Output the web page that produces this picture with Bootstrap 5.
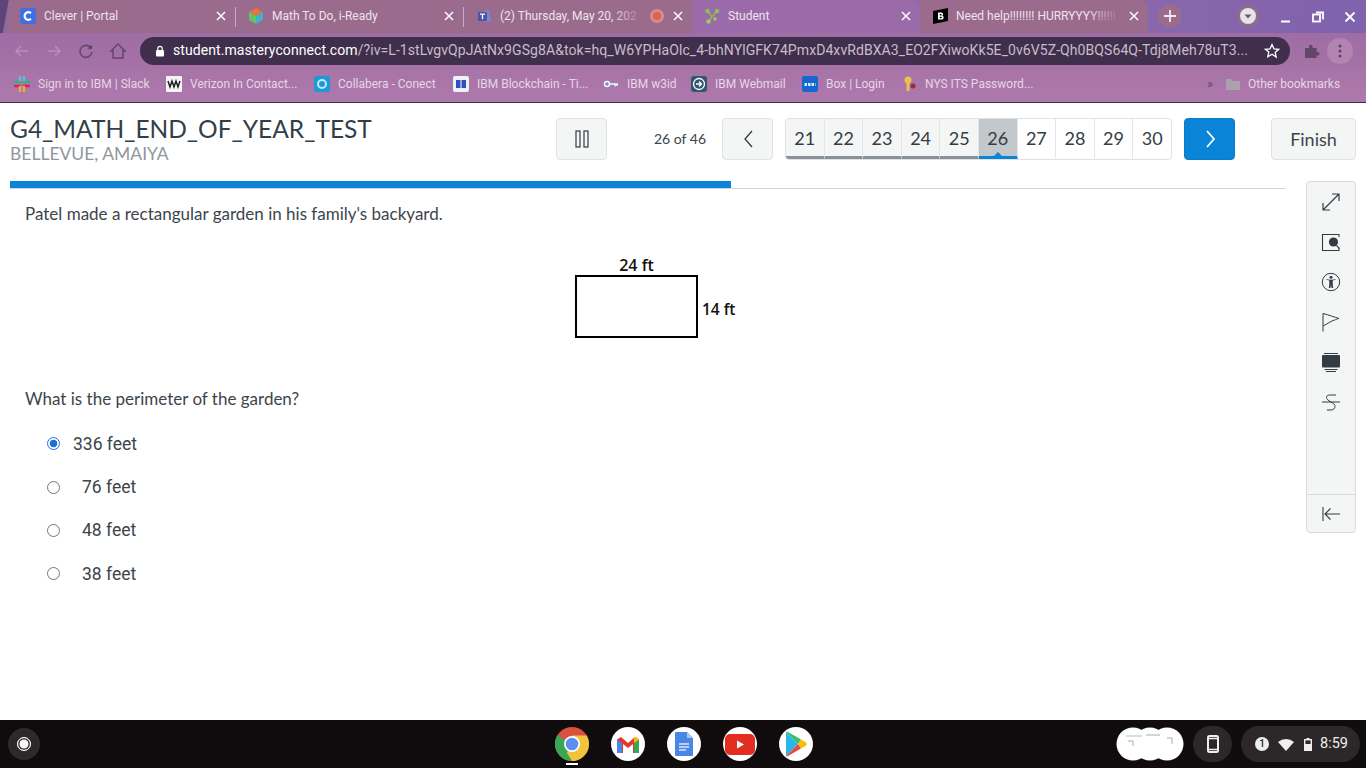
<!doctype html>
<html lang="en"><head><meta charset="utf-8"><title>Student</title>
<link href="https://cdn.jsdelivr.net/npm/bootstrap@5.3.0/dist/css/bootstrap.min.css" rel="stylesheet">
<style>
html,body{height:100%;overflow:hidden}
body{font-family:"Lato",sans-serif;color:#333c44;background:#fff}
.screen{height:768px;width:1366px}
.browser{height:103px;background:linear-gradient(100deg,#5f4478 0,#5f4478 8px,#8f6a9c 9px,#9a6ca6 50%,#8b68ac 80%,#7d62ac 100%);font-family:"Roboto",sans-serif;border-bottom:1px solid #3c2c46;flex:none}
.tabstrip{height:33px;padding-left:8px}
.tabx{height:33px;width:227px;background:#9a6b8c;padding:0 9px 2px 12px;font-size:12px;color:#efe3ee;flex:none;position:relative}
.tabx.first{border-radius:8px 0 0 0}
.tabx.wide{width:228px}
.tabx.live{background:#9b6aa8;border-radius:8px 8px 0 0;width:228px}
.tabx.last{border-radius:0 8px 0 0;width:228px}
.tabx .ttl{flex:1;margin-left:8px;white-space:nowrap;overflow:hidden;position:relative;min-width:0}
.tabx .ttl.fade-out::after{content:"";position:absolute;right:0;top:0;bottom:0;width:34px;background:linear-gradient(90deg,rgba(154,107,140,0),#9a6b8c)}
.sep{width:1px;height:20px;background:#c9a9c6;flex:none;align-self:center}
.fav{width:16px;height:16px;flex:none;display:block}
.tabicon-x{width:10px;height:10px;flex:none;margin-left:8px}
.plusbox{height:33px;margin-left:10px;padding-bottom:2px}
.winbox{height:33px;padding-right:10px;padding-bottom:2px;gap:20px}
.win-a{margin-top:4px}.win-b{margin-top:2px}
.tools{height:36px;background:linear-gradient(#9e6da4,#a672a7);padding-left:12px}
.nav-ic{width:20px;margin-right:12px;flex:none}
.omni{height:28px;width:1150px;margin-left:0;background:#3f2f4c;border-radius:14px;color:#c8bccb;font-size:14.05px;padding:0 10px 0 15px;white-space:nowrap;overflow:hidden;flex:none}
.omni b{font-weight:400;color:#fff}
.omni .url{letter-spacing:.05px}
.dots{width:26px;height:26px;border-radius:50%;background:#b184b2;margin-left:7px}
.ext-ic{margin-left:14px}
.bmarks{height:33px;background:linear-gradient(#a774a8,#ae79ad);padding:0 0 3px 14px;font-size:12px;color:#e6d6e6;white-space:nowrap}
.bm{display:flex;align-items:center;gap:8px;flex:none}
.w1{width:152px}.w2{width:148px}.w3{width:139px}.w4{width:150px}.w5{width:88px}.w6{width:111px}.w7{width:99px}.w8{width:307px}
.more{color:#5d4866;font-size:13px;width:18px;flex:none;margin-left:-1px}
.othr{gap:7px}
.page{flex:1;position:relative;min-height:0;background:#fff}
.testhead{padding:13px 10px 0 10px;height:78px}
.leftname{width:546px;flex:none}
.testname{font-size:24.5px;line-height:26px;color:#333f48;margin:0;font-weight:400}
.student{font-size:17.5px;line-height:22px;color:#8f979e;margin-top:1px}
.ctlrow{padding-top:2px}
.ctl{height:42px;width:51px;background:#f4f5f5;border:1px solid #dfe1e2;border-radius:4px;flex:none;padding:0}
.ctl.blue{background:#0a84d6;border-color:#0a7cc9}
.ofn{width:115px;text-align:center;font-size:14px;color:#3c454c;flex:none;padding-left:31px;line-height:42px}
.pgr{margin-left:12px;margin-right:12px;display:flex;height:42px;width:387px;border:1px solid #dfe1e2;border-radius:4px;overflow:hidden;flex:none}
.pgr span{flex:1;text-align:center;line-height:38px;font-size:18px;color:#333c44;border-right:1px solid #e3e5e6;border-bottom:4px solid transparent;position:relative;height:41px}
.pgr span:last-child{border-right:0}
.pgr .did{background:#f4f5f5;border-bottom-color:#8a9299}
.pgr .cur{background:#c3c8cc;border-bottom-color:#0a84d6}
.pgr .cur::after{content:"";position:absolute;left:50%;bottom:0;margin-left:-4px;border:4px solid transparent;border-top:0;border-bottom-color:#0a84d6}
.finish{width:85px;font-size:18px;color:#3c454c;margin-left:36px}
.work{padding-left:10px;padding-right:10px}
.mainpane{width:1276px;flex:none}
.bar{height:8px;border-bottom:1px solid #d4d6d8;position:relative}
.bar i{display:block;height:7px;width:721px;background:#0a84d6}
.qtext{font-size:17px;line-height:24px;color:#3c454c;margin:0;padding-left:15px}
.qtop{padding-top:13px}
.qnext{margin-top:23px}
.fig{margin-top:26px;height:112px;padding-left:565px;font-family:"Open Sans",sans-serif;font-weight:600;font-size:16px;color:#111}
.fig .lbl1{width:123px;text-align:center;line-height:26px;height:23px}
.fig .rect{width:123px;height:63px;border:2px solid #000}
.fig .lbl2{margin-left:4px;margin-top:45px;line-height:24px;font-size:15.5px}
.opts{margin-top:11px;padding-left:37px;font-family:"Roboto",sans-serif;font-size:17.5px;color:#3c454c}
.opt{height:43.4px;display:flex;align-items:center;margin:0}
.opt input{width:13px;height:13px;margin:0;flex:none;border:1px solid #767676;background-color:#fff}
.opt input:checked{background-image:none;background:radial-gradient(circle,#1a6fe0 0 3.4px,#fff 4.2px);border:1.5px solid #1a6fe0}
.opt .tx{margin-left:22px}.opt .tx.wider{margin-left:13px}
.side{width:50px;height:352px;background:#f4f5f5;border:1px solid #d8dadb;border-radius:4px;margin-left:20px;flex:none}
.side .ic{height:40px;display:flex;align-items:center;justify-content:center;flex:none}
.side .foot{margin-top:auto;border-top:1px solid #d8dadb;height:38px}
.shelf{height:48px;background:#100c0d;flex:none;position:relative}
.launcher{width:32px;height:32px;border-radius:50%;background:#2e2a2b;margin-left:8px}
.launcher i{display:block;width:14px;height:14px;border-radius:50%;background:#fff;border:1.500px solid #fff;box-shadow:inset 0 0 0 1.500px #2e2a2b}
.dock{position:absolute;left:555px;top:7px;gap:22px}
.dk{width:34px;height:34px;border-radius:50%;background:#fff;display:flex;align-items:center;justify-content:center;flex:none}
.dk.chrome{background:none}
.pin{position:absolute;left:566px;top:43px;width:12px;height:2px;background:#fff}
.tray{position:absolute;right:6px;top:6px;color:#eee;font-family:"Roboto",sans-serif;font-size:14.5px}
.thumbs{display:block;margin-right:9px}
.pill{height:36px;background:#2c2829;border-radius:18px}
.pill.round{width:39px;margin-right:9px}
.pill.stat{width:119px;padding-left:14px}
.num{width:14px;height:14px;border-radius:50%;background:#eee;color:#222;font-size:10px;line-height:14px;text-align:center;font-weight:500;margin-right:9px;flex:none}
.wifi{margin-right:10px}.batt{margin-right:8px}
</style></head>
<body>
<div class="screen d-flex flex-column">
<header class="browser d-flex flex-column">
 <div class="tabstrip d-flex align-items-end">
  <div class="tabx first d-flex align-items-center">
   <svg class="fav" viewBox="0 0 16 16"><rect width="16" height="16" rx="3" fill="#3f6fe0"/><path d="M11 5.200A3.800 3.800 0 1 0 11 10.800" fill="none" stroke="#fff" stroke-width="2.200"/></svg>
   <span class="ttl">Clever | Portal</span>
   <svg class="tabicon-x" viewBox="0 0 10 10"><path d="M1 1l8 8M9 1l-8 8" stroke="#fff" stroke-width="1.500"/></svg>
  </div>
  <div class="sep"></div>
  <div class="tabx d-flex align-items-center">
   <svg class="fav" viewBox="0 0 16 16"><path d="M8 0l7 4-7 4-7-4z" fill="#e8743b"/><path d="M1 4l7 4v8l-7-4z" fill="#5fc46a"/><path d="M15 4l-7 4v8l7-4z" fill="#3fb1c9"/></svg>
   <span class="ttl">Math To Do, i-Ready</span>
   <svg class="tabicon-x" viewBox="0 0 10 10"><path d="M1 1l8 8M9 1l-8 8" stroke="#fff" stroke-width="1.500"/></svg>
  </div>
  <div class="sep"></div>
  <div class="tabx wide d-flex align-items-center">
   <svg class="fav" viewBox="0 0 16 16"><circle cx="11" cy="5" r="3" fill="#7b83c9"/><rect x="7" y="7" width="8" height="7" rx="3" fill="#7b83c9"/><rect x="2" y="4" width="9" height="9" rx="1.500" fill="#4b53a8"/><path d="M4 6.200h5M6.500 6.200v5" stroke="#fff" stroke-width="1.300"/></svg>
   <span class="ttl fade-out">(2) Thursday, May 20, 202</span>
   <svg class="fav ms-1" viewBox="0 0 16 16"><circle cx="8" cy="8" r="7" fill="#d98d8a"/><circle cx="8" cy="8" r="4" fill="#e2604c"/></svg>
   <svg class="tabicon-x" viewBox="0 0 10 10"><path d="M1 1l8 8M9 1l-8 8" stroke="#fff" stroke-width="1.500"/></svg>
  </div>
  <div class="tabx live d-flex align-items-center">
   <svg class="fav" viewBox="0 0 16 16"><path d="M3.500 3L8 9l5-6M8 9l-3.500 4.500" stroke="#8cc152" stroke-width="1.300" fill="none"/><circle cx="3.500" cy="3" r="2.300" fill="#8cc152"/><circle cx="13" cy="3" r="2.300" fill="#8cc152"/><circle cx="4.500" cy="13.500" r="2.300" fill="#a3c95d"/><circle cx="11" cy="11" r="1.800" fill="#a3c95d"/></svg>
   <span class="ttl">Student</span>
   <svg class="tabicon-x" viewBox="0 0 10 10"><path d="M1 1l8 8M9 1l-8 8" stroke="#fff" stroke-width="1.500"/></svg>
  </div>
  <div class="tabx last d-flex align-items-center">
   <svg class="fav" viewBox="0 0 16 16"><path d="M1 3l15-3v13L1 16z" fill="#000"/><path d="M6 4.500h3.500a1.800 1.800 0 0 1 .8 3.300 1.900 1.900 0 0 1-.8 3.700H6zM7.800 6v1.400h1.200a.7.7 0 0 0 0-1.400zM7.800 8.700v1.500h1.300a.75.75 0 0 0 0-1.500z" fill="#fff"/></svg>
   <span class="ttl fade-out">Need help!!!!!!!! HURRYYYY!!!!!!</span>
   <svg class="tabicon-x" viewBox="0 0 10 10"><path d="M1 1l8 8M9 1l-8 8" stroke="#fff" stroke-width="1.500"/></svg>
  </div>
  <div class="plusbox d-flex align-items-center">
   <svg width="24" height="24" viewBox="0 0 24 24"><circle cx="12" cy="12" r="12" fill="#9a6b8c"/><path d="M12 6v12M6 12h12" stroke="#f3e8f1" stroke-width="1.800"/></svg>
  </div>
  <div class="winbox d-flex align-items-center ms-auto">
   <svg width="24" height="24" viewBox="0 0 24 24"><circle cx="12" cy="12" r="12" fill="#8f6a95"/><circle cx="12" cy="12" r="8" fill="#e8e3ea"/><path d="M8.500 10.500h7L12 14.500z" fill="#6a5a70"/></svg>
   <svg class="win-a" width="12" height="12" viewBox="0 0 12 12"><path d="M1 9.500h9" stroke="#fff" stroke-width="2"/></svg>
   <svg class="win-b" width="12" height="12" viewBox="0 0 12 12"><rect x="1" y="3.500" width="7" height="7" fill="none" stroke="#fff" stroke-width="1.800"/><path d="M4 1.500h7v7" fill="none" stroke="#fff" stroke-width="1.800"/></svg>
   <svg class="win-b" width="12" height="12" viewBox="0 0 12 12"><path d="M1.500 1.500l9 9M10.500 1.500l-9 9" stroke="#fff" stroke-width="1.800"/></svg>
  </div>
 </div>
 <div class="tools d-flex align-items-center">
  <svg class="nav-ic" height="16" viewBox="0 0 20 16"><path d="M16 8H4M9 3L4 8l5 5" fill="none" stroke="#b78fb8" stroke-width="1.600"/></svg>
  <svg class="nav-ic" height="16" viewBox="0 0 20 16"><path d="M4 8h12M11 3l5 5-5 5" fill="none" stroke="#b78fb8" stroke-width="1.600"/></svg>
  <svg class="nav-ic" height="16" viewBox="0 0 20 16"><path d="M15 5A6 6 0 1 0 16 9" fill="none" stroke="#4b3a55" stroke-opacity=".7" stroke-width="1.600"/><path d="M16 1.500V6H11.500z" fill="#4b3a55" fill-opacity=".7"/></svg>
  <svg class="nav-ic" height="18" viewBox="0 0 20 18"><path d="M10 2L3 9h2v7h10V9h2z" fill="none" stroke="#4b3a55" stroke-opacity=".75" stroke-width="1.500"/></svg>
  <div class="omni d-flex align-items-center">
   <svg width="10" height="12" viewBox="0 0 10 12" class="me-2 flex-shrink-0"><rect x="1" y="5" width="8" height="6.500" rx="1" fill="#fff"/><path d="M2.800 5V3.500a2.200 2.200 0 0 1 4.400 0V5" fill="none" stroke="#fff" stroke-width="1.200"/></svg>
   <span class="flex-grow-1 overflow-hidden url"><b>student.masteryconnect.com</b>/?iv=L-1stLvgvQpJAtNx9GSg8A&amp;tok=hq_W6YPHaOlc_4-bhNYlGFK74PmxD4xvRdBXA3_EO2FXiwoKk5E_0v6V5Z-Qh0BQS64Q-Tdj8Meh78uT3...</span>
   <svg width="16" height="16" viewBox="0 0 16 16" class="flex-shrink-0 ms-2"><path d="M8 1.500l2 4.300 4.600.5-3.400 3.100 1 4.600L8 11.300l-4.200 2.400 1-4.600L1.400 6.300 6 5.800z" fill="none" stroke="#fff" stroke-width="1.300"/></svg>
  </div>
  <svg class="ext-ic" width="16" height="16" viewBox="0 0 16 16"><path d="M1 5h4V3.500a1.800 1.800 0 0 1 3.600 0V5h4v4h1.200a1.800 1.800 0 0 1 0 3.600H12.600V15H1z" fill="#4b3a55" fill-opacity=".75"/></svg>
  <div class="dots d-flex align-items-center justify-content-center">
   <svg width="4" height="16" viewBox="0 0 4 16"><circle cx="2" cy="3" r="1.500" fill="#5a4560"/><circle cx="2" cy="8" r="1.500" fill="#5a4560"/><circle cx="2" cy="13" r="1.500" fill="#5a4560"/></svg>
  </div>
 </div>
 <div class="bmarks d-flex align-items-center flex-grow-1">
  <div class="bm w1"><svg class="fav" viewBox="0 0 16 16"><path d="M6 1v4M10 1v4" stroke="#5bc0de" stroke-width="2.400" stroke-linecap="round"/><path d="M1 6h5M10 6h5" stroke="#2eb67d" stroke-width="2.400" stroke-linecap="round"/><path d="M1 10h5M10 10h5" stroke="#e01e5a" stroke-width="2.400" stroke-linecap="round"/><path d="M6 11v4M10 11v4" stroke="#ecb22e" stroke-width="2.400" stroke-linecap="round"/></svg>Sign in to IBM | Slack</div>
  <div class="bm w2"><svg class="fav" viewBox="0 0 16 16"><rect width="16" height="16" rx="1" fill="#f4f4f4"/><path d="M2 5l2 6 2-6 2 6 2-6 2 6 2-6" fill="none" stroke="#222" stroke-width="1.500"/></svg>Verizon In Contact...</div>
  <div class="bm w3"><svg class="fav" viewBox="0 0 16 16"><rect width="16" height="16" rx="2" fill="#1d9ad6"/><circle cx="8" cy="8" r="4" fill="none" stroke="#c7e9f7" stroke-width="2"/></svg>Collabera - Conect</div>
  <div class="bm w4"><svg class="fav" viewBox="0 0 16 16"><rect width="16" height="16" rx="2" fill="#eef0fa"/><rect x="3" y="4" width="10" height="8" fill="#2f52b8"/><path d="M8 4v8" stroke="#fff"/></svg>IBM Blockchain - Ti...</div>
  <div class="bm w5"><svg class="fav" viewBox="0 0 16 16"><circle cx="4" cy="8" r="2.500" fill="none" stroke="#dff" stroke-width="1.500"/><path d="M6.500 8H15M12 8v2.500M14 8v2" stroke="#dff" stroke-width="1.500"/></svg>IBM w3id</div>
  <div class="bm w6"><svg class="fav" viewBox="0 0 16 16"><rect width="16" height="16" rx="3" fill="#33566f"/><circle cx="8" cy="8" r="5.500" fill="none" stroke="#fff" stroke-width="1.300"/><path d="M5 8h5M8 5.500L10.500 8 8 10.500" fill="none" stroke="#fff" stroke-width="1.300"/></svg>IBM Webmail</div>
  <div class="bm w7"><svg class="fav" viewBox="0 0 16 16"><rect width="16" height="16" rx="2" fill="#1767d2"/><path d="M2.500 8.500h11" stroke="#dbe9fb" stroke-width="3" stroke-dasharray="2.500 1"/></svg>Box | Login</div>
  <div class="bm w8"><svg class="fav" viewBox="0 0 16 16"><circle cx="7" cy="4" r="3.500" fill="#e8c14e"/><path d="M7 6v9" stroke="#e8c14e" stroke-width="3"/><circle cx="12" cy="10" r="2.500" fill="#9c2a3a"/></svg>NYS ITS Password...</div>
  <span class="more">&raquo;</span>
  <div class="bm othr"><svg class="fav" viewBox="0 0 16 16"><path d="M1 3h5l2 2h7v9H1z" fill="#ada0ae"/></svg><span>Other bookmarks</span></div>
 </div>
</header>

<main class="page d-flex flex-column">
 <div class="testhead d-flex">
  <div class="leftname"><h1 class="testname">G4_MATH_END_OF_YEAR_TEST</h1><div class="student">BELLEVUE, AMAIYA</div></div>
  <div class="ctlrow d-flex align-items-start">
   <button class="ctl d-flex align-items-center justify-content-center" type="button" aria-label="Pause"><svg width="14" height="18" viewBox="0 0 14 18"><rect x="1" y="1" width="4" height="16" fill="none" stroke="#333c44" stroke-width="1.200"/><rect x="9" y="1" width="4" height="16" fill="none" stroke="#333c44" stroke-width="1.200"/></svg></button>
   <div class="ofn">26 of 46</div>
   <button class="ctl d-flex align-items-center justify-content-center" type="button" aria-label="Previous"><svg width="12" height="20" viewBox="0 0 12 20"><path d="M10 2L3 10l7 8" fill="none" stroke="#333c44" stroke-width="1.300"/></svg></button>
   <div class="pgr"><span class="did">21</span><span class="did">22</span><span class="did">23</span><span class="did">24</span><span class="did">25</span><span class="cur">26</span><span>27</span><span>28</span><span>29</span><span>30</span></div>
   <button class="ctl blue d-flex align-items-center justify-content-center" type="button" aria-label="Next"><svg width="12" height="20" viewBox="0 0 12 20"><path d="M3 2l7 8-7 8" fill="none" stroke="#fff" stroke-width="1.800"/></svg></button>
   <button class="ctl finish" type="button">Finish</button>
  </div>
 </div>
 <div class="work d-flex">
  <div class="mainpane">
   <div class="bar"><i></i></div>
   <p class="qtext qtop">Patel made a rectangular garden in his family's backyard.</p>
   <div class="fig d-flex">
    <div><div class="lbl1">24 ft</div><div class="rect"></div></div>
    <div class="lbl2">14 ft</div>
   </div>
   <p class="qtext qnext">What is the perimeter of the garden?</p>
   <div class="opts">
    <label class="opt"><input class="form-check-input" type="radio" name="q" checked><span class="tx wider">336 feet</span></label>
    <label class="opt"><input class="form-check-input" type="radio" name="q"><span class="tx">76 feet</span></label>
    <label class="opt"><input class="form-check-input" type="radio" name="q"><span class="tx">48 feet</span></label>
    <label class="opt"><input class="form-check-input" type="radio" name="q"><span class="tx">38 feet</span></label>
   </div>
  </div>
  <aside class="side d-flex flex-column">
   <div class="ic"><svg width="20" height="20" viewBox="0 0 20 20"><path d="M2 18L18 2M11 2h7v7M2 11v7h7" fill="none" stroke="#333c44" stroke-width="1.200"/></svg></div>
   <div class="ic"><svg width="20" height="20" viewBox="0 0 20 20"><path d="M18 5V2.500H1.500v16H18V16" fill="none" stroke="#333c44" stroke-width="1.100"/><circle cx="12.500" cy="10" r="4.600" fill="#333c44"/><path d="M15.500 13.500l3 3" stroke="#333c44" stroke-width="1.100"/></svg></div>
   <div class="ic"><svg width="20" height="20" viewBox="0 0 20 20"><circle cx="10" cy="10" r="8.700" fill="none" stroke="#333c44" stroke-width="1"/><circle cx="10" cy="5.300" r="1.500" fill="#333c44"/><path d="M5.200 7.800L8.300 8.400V12L7.800 16H9.400L10 12.800 10.600 16H12.200L11.700 12V8.400L14.800 7.800V7.200L10 7.700 5.200 7.200z" fill="#333c44"/></svg></div>
   <div class="ic"><svg width="20" height="20" viewBox="0 0 20 20"><path d="M2 19.500V1.500C8 3 13 5 18 6.500c-2 .3-3 1.200-4.500 1.500C10 9 6 12 2 14" fill="none" stroke="#333c44" stroke-width="1"/></svg></div>
   <div class="ic"><svg width="20" height="20" viewBox="0 0 20 20"><path d="M3 1.500h14M3.500 17.500h13M5 19.500h10" stroke="#333c44" stroke-width="1"/><rect x="1" y="3" width="18" height="12.500" rx="1" fill="#333c44"/></svg></div>
   <div class="ic"><svg width="20" height="20" viewBox="0 0 20 20"><path d="M1 10h18" stroke="#333c44" stroke-width="1"/><path d="M15 3H8.500C6.300 3 5.500 4.200 5.500 5.500S7 8.500 10 10s4 2.800 4 4.500S12.500 18 10 18H6" fill="none" stroke="#333c44" stroke-width="1"/></svg></div>
   <div class="ic foot"><svg width="20" height="16" viewBox="0 0 20 16"><path d="M2 1v14M19 8H4M9.500 2.500L4 8l5.500 5.500" fill="none" stroke="#333c44" stroke-width="1.100"/></svg></div>
  </aside>
 </div>
</main>

<footer class="shelf d-flex align-items-center">
 <div class="launcher d-flex align-items-center justify-content-center"><i></i></div>
 <div class="dock d-flex">
  <div class="dk chrome"><svg width="34" height="34" viewBox="0 0 34 34"><circle cx="17" cy="17" r="17" fill="#d9503f"/><path d="M17 17L2.300 25.500A17 17 0 0 1 2.300 8.500z" fill="#3aa757"/><path d="M17 34A17 17 0 0 1 2.300 25.500L11 17z" fill="#3aa757"/><path d="M17 34A17 17 0 0 0 31.700 8.500H17L12 26z" fill="#f2c43d"/><circle cx="17" cy="17" r="8" fill="#fff"/><circle cx="17" cy="17" r="6.300" fill="#5a8ff0"/></svg></div>
  <div class="dk"><svg width="24" height="19" viewBox="0 0 24 19"><path d="M1 18V4.500L5 2l7 6 7-6 4 2.500V18h-6V9l-5 4-5-4v9z" fill="#e0392c"/><path d="M1 18V4.500L6 8v10z" fill="#4a86e8"/><path d="M23 18V4.500L18 8v10z" fill="#34a853"/><path d="M23 4.500L18 8V3l2-1.500z" fill="#fbbc04"/></svg></div>
  <div class="dk"><svg width="18" height="24" viewBox="0 0 18 24"><path d="M1 0h11l6 6v17a1 1 0 0 1-1 1H1a1 1 0 0 1-1-1V1a1 1 0 0 1 1-1z" fill="#4a86e8"/><path d="M12 0l6 6h-6z" fill="#a6c4f5"/><path d="M4 12h10M4 15h10M4 18h7" stroke="#dbe7fb" stroke-width="1.300"/></svg></div>
  <div class="dk"><svg width="30" height="21" viewBox="0 0 30 21"><rect width="30" height="21" rx="5" fill="#e22d20"/><path d="M12 6.500l7 4-7 4z" fill="#fff"/></svg></div>
  <div class="dk"><svg width="22" height="26" viewBox="0 0 22 26"><path d="M1 1l12 12L1 25z" fill="#29b6e8"/><path d="M1 1c.6-.4 1.400-.3 2 0l13 7.500L13 13z" fill="#3ebc6e"/><path d="M1 25c.6.4 1.400.3 2 0l13-7.500L13 13z" fill="#e5493f"/><path d="M16 8.500l5 3c1 .6 1 2.400 0 3l-5 3L13 13z" fill="#fbbc04"/></svg></div>
 </div>
 <div class="pin"></div>
 <div class="tray d-flex align-items-center">
  <svg class="thumbs" width="68" height="34" viewBox="0 0 68 34"><circle cx="17" cy="17" r="16.500" fill="#fff"/><circle cx="34" cy="17" r="16.500" fill="#fff"/><circle cx="51" cy="17" r="16.500" fill="#fff"/><path d="M10 9h16" stroke="#9cc7d8"/><path d="M12 14h5v5M51 11h5v6M30 8h14" stroke="#aaa" fill="none"/></svg>
  <div class="pill round d-flex align-items-center justify-content-center"><svg width="12" height="18" viewBox="0 0 12 18"><rect x="1" y="1" width="10" height="16" rx="1.500" fill="none" stroke="#eee" stroke-width="2"/><path d="M1 3.500h10M1 14.500h10" stroke="#eee" stroke-width="1.500"/></svg></div>
  <div class="pill stat d-flex align-items-center"><span class="num">1</span><svg class="wifi" width="16" height="13" viewBox="0 0 16 13"><path d="M0 4a12 12 0 0 1 16 0l-8 9z" fill="#eee"/></svg><svg class="batt" width="8" height="13" viewBox="0 0 8 13"><rect x="2.500" y="0" width="3" height="2" fill="#eee"/><rect x=".7" y="1.700" width="6.600" height="10.600" fill="none" stroke="#eee" stroke-width="1.400"/><rect x="1" y="6" width="6" height="6" fill="#eee"/></svg><span>8:59</span></div>
 </div>
</footer>
</div>
<script src="https://cdn.jsdelivr.net/npm/bootstrap@5.3.0/dist/js/bootstrap.bundle.min.js"></script>
</body></html>
